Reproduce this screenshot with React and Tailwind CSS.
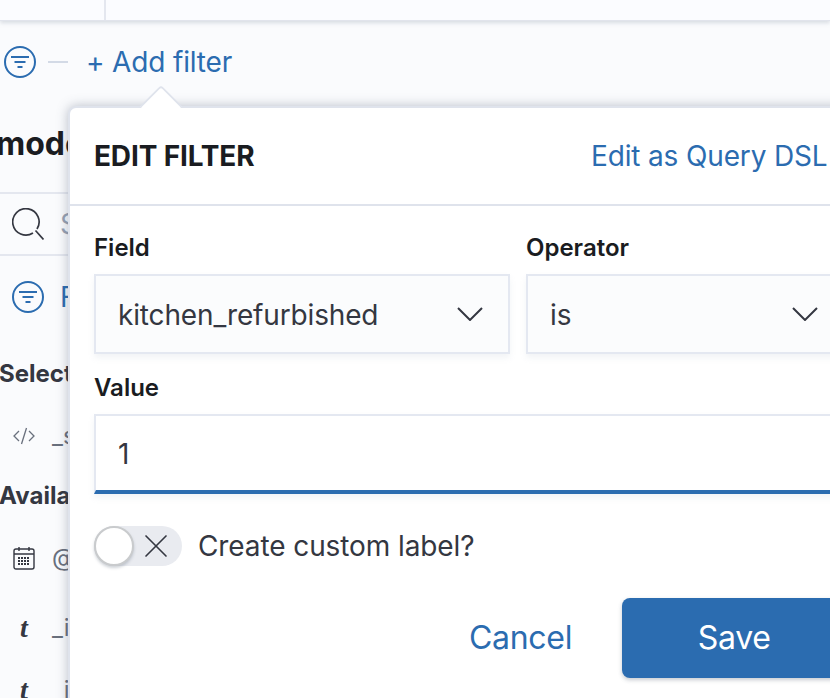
import { X } from "lucide-react";

function FilterIcon({ className }) {
  return (
    <svg className={className} viewBox="0 0 32 32" fill="none" stroke="currentColor" strokeWidth="2">
      <circle cx="16" cy="16" r="15" />
      <path d="M7 11h18M10.500 16h11M13.500 21h5" />
    </svg>
  );
}

function SearchIcon() {
  return (
    <svg className="h-8 w-8 shrink-0 text-[#343741]" viewBox="0 0 32 32" fill="none" stroke="currentColor" strokeWidth="1.700">
      <path d="M21 25A13.200 13.200 0 1 1 25 21" />
      <path d="M23.500 22.500l8 9" />
    </svg>
  );
}

function CalendarIcon() {
  return (
    <svg className="h-[24px] w-[22px] text-[#343741]" viewBox="0 0 22 24" fill="none" stroke="currentColor" strokeWidth="1.400">
      <rect x="1" y="3" width="20" height="20" rx="2" />
      <path d="M1 8h20M6 1v4M16 1v4" />
      <path d="M5 12h12M5 15h12M5 18h12" strokeWidth="1.800" strokeDasharray="2 1" />
    </svg>
  );
}

function FieldRow({ icon, name, className }) {
  return (
    <div className={`flex items-center whitespace-nowrap ${className}`}>
      <div className="flex w-[48px] shrink-0 justify-center">{icon}</div>
      <span className="ml-[4px] text-[24px] text-[#69707d]">{name}</span>
    </div>
  );
}

function TypeT() {
  return <span className="font-['Liberation_Serif',serif] text-[28px] font-bold italic leading-none text-[#343741]">t</span>;
}

function Chevron() {
  return (
    <svg className="h-[14px] w-[26px] text-[#343741]" viewBox="0 0 26 14" fill="none" stroke="currentColor" strokeWidth="2">
      <path d="M1 1l12 12L25 1" />
    </svg>
  );
}

function Select({ value, className }) {
  return (
    <div className={`flex h-20 items-center justify-between border-2 border-[#e4e8f1] bg-[#fbfcfd] pl-[22px] text-[28px] tracking-[-0.15px] text-[#343741] shadow-[0_4px_6px_rgba(152,162,179,0.12)] ${className}`}>
      <span className="pt-[2px]">{value}</span>
      <Chevron />
    </div>
  );
}

export default function App() {
  return (
    <div className="relative h-[698px] w-[830px] overflow-hidden bg-[#fafbfd] font-['Inter',sans-serif] text-[#1a1c21]">
      {/* Top bar */}
      <div className="flex h-[21px] border-b border-[#e1e4ec] bg-[#fbfcff] shadow-[0_2px_4px_rgba(152,162,179,0.35)]">
        <div className="h-full w-[106px] border-r-2 border-[#e4e7ef]" />
      </div>

      {/* Filter bar */}
      <div className="flex h-[82px] items-center pb-[1px] pl-[4px]">
        <FilterIcon className="h-8 w-8 text-[#2b6cb0]" />
        <div className="ml-[12px] h-[2px] w-5 bg-[#d3dae6]" />
        <span className="ml-[18px] text-[28px] leading-none tracking-[-0.15px] text-[#2b6cb0]">+ Add filter</span>
      </div>

      {/* Sidebar behind the popover */}
      <div className="w-[70px] overflow-hidden">
        <div className="flex h-[91px] items-center border-b-2 border-[#e4e7ef] pb-[8px]">
          <span className="-ml-[4px] text-[32px] font-bold whitespace-nowrap">mode</span>
        </div>
        <div className="flex h-[62px] items-center gap-[16px] border-b-2 border-[#e4e7ef] pl-[12px]">
          <SearchIcon />
          <span className="text-[28px] text-[#98a2b3]">S</span>
        </div>
        <div className="flex h-[102px] items-center gap-[16px] pb-[20px] pl-[12px]">
          <FilterIcon className="h-8 w-8 shrink-0 text-[#2b6cb0]" />
          <span className="text-[28px] text-[#2b6cb0]">F</span>
        </div>
        <div className="-ml-[1px] h-[38px] text-[24px] leading-[32px] font-bold whitespace-nowrap text-[#343741]">Selected</div>
        <FieldRow
          className="h-[80px]"
          name="_source"
          icon={
            <svg className="h-6 w-6 text-[#69707d]" viewBox="0 0 24 24" fill="none" stroke="currentColor" strokeWidth="1.300">
              <path d="M7 7l-5 5 5 5M17 7l5 5-5 5M14.500 4l-5 16" />
            </svg>
          }
        />
        <div className="-ml-[1px] mt-[4px] h-[38px] text-[24px] leading-[32px] font-bold whitespace-nowrap text-[#343741]">Available</div>
        <FieldRow className="mt-[14px] h-[52px]" name="@timestamp" icon={<CalendarIcon />} />
        <FieldRow className="mt-[18px] h-[52px]" name="_id" icon={<TypeT />} />
        <FieldRow className="mt-[10px] h-[52px]" name="_index" icon={<TypeT />} />
      </div>

      {/* Popover */}
      <div className="absolute left-[68px] top-[106px] h-[640px] w-[800px] rounded-tl-lg border-t-2 border-l-2 border-[#dfe3ec] bg-white shadow-[0_0_12px_rgba(65,78,101,0.35)]">
        <div className="absolute -top-[17px] left-[76px] h-[30px] w-[30px] rotate-45 rounded-tl-sm border-t-2 border-l-2 border-[#dfe3ec] bg-white" />
        <div className="relative flex h-[98px] items-center justify-between border-b-2 border-[#dfe3ec] pl-[24px]">
          <span className="text-[28px] font-bold tracking-[-0.15px] text-[#1a1c21]">EDIT FILTER</span>
          <span className="mr-[39px] w-[238px] shrink-0 whitespace-nowrap text-[28px] tracking-[-0.15px] text-[#2b6cb0]">Edit as Query DSL</span>
        </div>

        <div className="pl-[24px] pt-[27px]">
          <div className="flex gap-4">
            <div className="w-[416px] shrink-0">
              <div className="mb-[11px] text-[24px] leading-[30px] font-semibold text-[#1a1c21]">Field</div>
              <Select value="kitchen_refurbished" className="pr-[25px]" />
            </div>
            <div className="w-[400px] shrink-0">
              <div className="mb-[11px] text-[24px] leading-[30px] font-semibold text-[#1a1c21]">Operator</div>
              <Select value="is" className="w-[400px] pr-[106px]" />
            </div>
          </div>

          <div className="mt-[19px] text-[24px] leading-[30px] font-semibold text-[#1a1c21]">Value</div>
          <div className="mt-[11px] flex h-20 w-[800px] items-center border-2 border-b-4 border-[#e4e8f1] border-b-[#2b6cb0] bg-white pl-[22px] pt-[2px] text-[28px] text-[#343741] shadow-[0_4px_6px_rgba(152,162,179,0.12)]">
            1
          </div>

          <div className="mt-[31px] flex items-center gap-4">
            <div className="flex h-10 w-[88px] items-center rounded-full bg-[#e9ebf0]">
              <div className="h-10 w-10 shrink-0 rounded-full border-2 border-[#c9cbcd] bg-white shadow-[0_2px_3px_rgba(65,78,101,0.25)]" />
              <X className="ml-[2px] h-10 w-10 text-[#343741]" strokeWidth={1} />
            </div>
            <span className="text-[28px] tracking-[-0.1px] text-[#343741]">Create custom label?</span>
          </div>

          <div className="mt-[31px] flex items-center">
            <span className="ml-[375px] text-[32px] tracking-[-0.3px] text-[#2b6cb0]">Cancel</span>
            <button className="ml-[50px] flex h-20 w-[224px] shrink-0 items-center justify-center rounded-lg bg-[#2b6cb0] text-[32px] tracking-[-0.3px] text-white shadow-[0_2px_4px_rgba(65,78,101,0.3)]">
              Save
            </button>
          </div>
        </div>
      </div>
    </div>
  );
}
